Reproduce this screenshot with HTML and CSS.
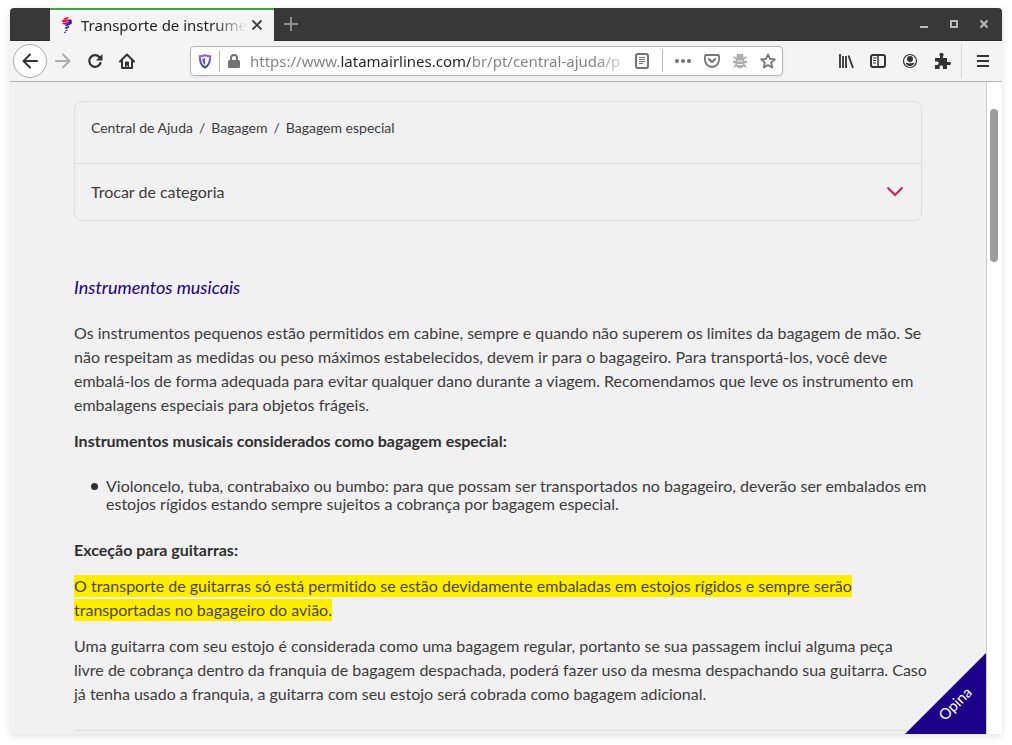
FILE: index.html
```html
<!DOCTYPE html>
<html lang="pt-BR">
<head>
<meta charset="utf-8">
<meta name="viewport" content="width=device-width, initial-scale=1">
<title>Transporte de instrumentos musicais</title>
<link rel="stylesheet" href="styles.css">
</head>
<body>
<div class="window">
  <header class="titlebar">
    <div class="tab">
      <svg class="favicon" width="14" height="18" viewBox="0 0 14 18"><path fill="#e8114b" d="M3 2.500 8.500.800v1.500L5 4zM1.500 4l9.500-.800v1.600L3 6.500z"/><path fill="#a3148a" d="m2 7 9.500-1.600v1.800L4 8.800z"/><path fill="#2d1baa" d="m8 4.600 3.800-.500-.300 4L6 10.400l-1-1.600 4-1.200zM5 11.600l4-1.600v1.700l-3.500 1.300zM5.500 14l2-.800v1.400l-1.700.700zM4 16l2-.500v1.200l-1.500.300z"/></svg>
      <span class="tab-title">Transporte de instrume</span>
      <button class="icon-btn tab-close" aria-label="Fechar aba"><svg width="12" height="12" viewBox="0 0 12 12"><path d="m1.500 1.500 9 9m0-9-9 9" fill="none" stroke="currentColor" stroke-width="1.800"/></svg></button>
    </div>
    <button class="icon-btn new-tab" aria-label="Nova aba"><svg width="14" height="14" viewBox="0 0 14 14"><path d="M7 0v14M0 7h14" fill="none" stroke="currentColor" stroke-width="1.500"/></svg></button>
    <div class="window-controls">
      <button class="icon-btn" aria-label="Minimizar"><svg width="10" height="10" viewBox="0 0 10 10"><path d="M1 8h8" stroke="currentColor" stroke-width="2"/></svg></button>
      <button class="icon-btn" aria-label="Maximizar"><svg width="10" height="10" viewBox="0 0 10 10"><path d="M2 2h6v6H2z" fill="none" stroke="currentColor" stroke-width="2"/></svg></button>
      <button class="icon-btn" aria-label="Fechar"><svg width="10" height="10" viewBox="0 0 10 10"><path d="m1.500 1.500 7 7m0-7-7 7" stroke="currentColor" stroke-width="2"/></svg></button>
    </div>
  </header>

  <nav class="toolbar" aria-label="Navegação">
    <button class="icon-btn back" aria-label="Voltar"><svg width="16" height="16" viewBox="0 0 16 16"><path d="M15 8H2m6-6.500L1.500 8 8 14.500" fill="none" stroke="currentColor" stroke-width="2" stroke-linecap="round" stroke-linejoin="round"/></svg></button>
    <button class="icon-btn nav-btn muted" aria-label="Avançar"><svg width="16" height="16" viewBox="0 0 16 16"><path d="M1 8h13M8 1.500 14.500 8 8 14.500" fill="none" stroke="currentColor" stroke-width="2" stroke-linecap="round" stroke-linejoin="round"/></svg></button>
    <button class="icon-btn nav-btn" aria-label="Recarregar"><svg width="16" height="16" viewBox="0 0 16 16"><path d="M12.500 4.200A5.800 5.800 0 1 0 13.500 10" fill="none" stroke="currentColor" stroke-width="2.200" stroke-linecap="round"/><path d="M15.500 1v6.500H9z" fill="currentColor"/></svg></button>
    <button class="icon-btn nav-btn" aria-label="Página inicial"><svg width="16" height="16" viewBox="0 0 16 16"><path d="M1 8.500 8 1.500l7 7M3 8v7h10V8" fill="none" stroke="currentColor" stroke-width="2" stroke-linecap="round" stroke-linejoin="round"/><path d="M6 15V9.500a1 1 0 0 1 1-1h2a1 1 0 0 1 1 1V15H8.700v-2.500H7.500V15z" fill="currentColor"/></svg></button>

    <div class="address">
      <button class="icon-btn" aria-label="Proteção"><svg width="14" height="15" viewBox="0 0 14 15"><defs><linearGradient id="shield" x1="0" y1="0" x2="0" y2="1"><stop offset="0" stop-color="#9059ff"/><stop offset="1" stop-color="#3a4bb0"/></linearGradient></defs><path d="M7 1.200c2 .600 3.500.900 5.200 1 0 6-1 9.300-5.200 11.300C2.800 11.500 1.800 8.200 1.800 2.200 3.500 2.100 5 1.800 7 1.200z" fill="none" stroke="url(#shield)" stroke-width="2"/><path d="M7 4v7C5 9.500 4.500 7.500 4.300 4.700z" fill="url(#shield)"/></svg></button>
      <span class="divider"></span>
      <button class="icon-btn soft" aria-label="Conexão segura"><svg width="12" height="14" viewBox="0 0 12 14"><path d="M3 7V4a3 3 0 0 1 6 0v3" fill="none" stroke="currentColor" stroke-width="2"/><rect y="6" width="12" height="8" rx="1.500" fill="currentColor"/></svg></button>
      <input class="url" type="text" aria-label="Endereço" value="https://www.latamairlines.com/br/pt/central-ajuda/p">
      <button class="icon-btn soft" aria-label="Modo de leitura"><svg width="14" height="16" viewBox="0 0 14 16"><rect x="1" y="1" width="12" height="14" rx="2" fill="none" stroke="currentColor" stroke-width="2"/><path d="M4 4.500h6M4 6.500h6M4 8.500h6M4 10.500h4" stroke="currentColor"/></svg></button>
      <span class="divider reader-divider"></span>
      <div class="actions">
        <button class="icon-btn soft" aria-label="Mais ações"><svg width="18" height="16" viewBox="0 0 18 16" fill="currentColor"><circle cx="3" cy="8" r="2"/><circle cx="9" cy="8" r="2"/><circle cx="15" cy="8" r="2"/></svg></button>
        <button class="icon-btn soft" aria-label="Salvar no Pocket"><svg width="16" height="16" viewBox="0 0 16 16"><path d="M2 2h12a1 1 0 0 1 1 1v4a7 7 0 0 1-14 0V3a1 1 0 0 1 1-1z" fill="none" stroke="currentColor" stroke-width="1.800"/><path d="m4.800 6 3.200 3 3.200-3" fill="none" stroke="currentColor" stroke-width="2" stroke-linecap="round" stroke-linejoin="round"/></svg></button>
        <button class="icon-btn muted" aria-label="Relatar problema"><svg width="16" height="16" viewBox="0 0 16 16"><path d="m1.500 4 3.500 2M14.500 4 11 6M1 9h14M2 14l3-2.500m9 2.500-3-2.500M5 1l2 2m4-2L9 3" stroke="currentColor" stroke-width="1.800"/><ellipse cx="8" cy="9.500" rx="4.800" ry="6" fill="currentColor"/><circle cx="8" cy="4.500" r="3.500" fill="currentColor"/><path d="M5.500 8h5m-5 3.500h5" stroke="#fff" stroke-width="1.200"/></svg></button>
        <button class="icon-btn soft" aria-label="Adicionar aos favoritos"><svg width="16" height="16" viewBox="0 0 16 16"><path d="m8 1.500 2 4.400 4.800.500-3.600 3.200 1 4.900L8 12l-4.200 2.500 1-4.900L1.200 6.400 6 5.900z" fill="none" stroke="currentColor" stroke-width="1.800" stroke-linejoin="round"/></svg></button>
      </div>
    </div>

    <div class="tools">
      <button class="icon-btn" aria-label="Biblioteca"><svg width="16" height="16" viewBox="0 0 16 16"><path d="M2 1v14M5 3v12M8 3v12M10.500 2.500 15 15" fill="none" stroke="currentColor" stroke-width="1.800"/></svg></button>
      <button class="icon-btn" aria-label="Painel lateral"><svg width="16" height="16" viewBox="0 0 16 16"><rect x="1" y="2" width="14" height="12" rx="2" fill="none" stroke="currentColor" stroke-width="2"/><path d="M8 2v12" stroke="currentColor" stroke-width="1.500"/><path d="M3 5h3.500M3 7.500h3M3 10h3" stroke="currentColor"/></svg></button>
      <button class="icon-btn" aria-label="Conta"><svg width="16" height="16" viewBox="0 0 16 16"><circle cx="8" cy="8" r="6.500" fill="none" stroke="currentColor" stroke-width="1.200"/><circle cx="8" cy="6" r="3" fill="currentColor"/><path d="M3.500 9.500c1.500 1 7.500 1 9 0-.500 2.200-2.200 3.500-4.500 3.500s-4-1.300-4.500-3.500z" fill="currentColor"/></svg></button>
      <button class="icon-btn" aria-label="Extensões"><svg width="18" height="16" viewBox="0 0 18 16"><path d="M1 5h5V3a2 2 0 1 1 3 0v2h4v4h1.500a1.700 1.700 0 1 1 0 3H13v4H9v-2a1.700 1.700 0 0 0-3.400 0v2H1v-4h2a1.700 1.700 0 0 0 0-3.500H1z" fill="currentColor"/></svg></button>
      <span class="tools-divider"></span>
      <button class="icon-btn" aria-label="Abrir menu"><svg width="14" height="14" viewBox="0 0 14 14"><path d="M1 2h12M1 7h12M1 12h12" stroke="currentColor" stroke-width="2"/></svg></button>
    </div>
  </nav>

  <div class="viewport">
    <main class="page">
      <section class="category">
        <nav class="breadcrumb" aria-label="Trilha">
          <a href="#ajuda">Central de Ajuda</a><span>/</span><a href="#bagagem">Bagagem</a><span>/</span><a href="#especial">Bagagem especial</a>
        </nav>
        <button class="switcher">Trocar de categoria
          <svg width="18" height="11" viewBox="0 0 18 11"><path d="m1.500 1.500 7.500 7.500 7.500-7.500" fill="none" stroke="#d91a59" stroke-width="2"/></svg>
        </button>
      </section>

      <article class="article">
        <h1>Instrumentos musicais</h1>
        <p>Os instrumentos pequenos estão permitidos em cabine, sempre e quando não superem os limites da bagagem de mão. Se<br>não respeitam as medidas ou peso máximos estabelecidos, devem ir para o bagageiro. Para transportá-los, você deve<br>embalá-los de forma adequada para evitar qualquer dano durante a viagem. Recomendamos que leve os instrumento em<br>embalagens especiais para objetos frágeis.</p>
        <h2>Instrumentos musicais considerados como bagagem especial:</h2>
        <ul>
          <li><span>Violoncelo, tuba, contrabaixo ou bumbo: para que possam ser transportados no bagageiro, deverão ser embalados em<br>estojos rígidos estando sempre sujeitos a cobrança por bagagem especial.</span></li>
        </ul>
        <h2>Exceção para guitarras:</h2>
        <p><mark>O transporte de guitarras só está permitido se estão devidamente embaladas em estojos rígidos e sempre serão<br>transportadas no bagageiro do avião.</mark></p>
        <p>Uma guitarra com seu estojo é considerada como uma bagagem regular, portanto se sua passagem inclui alguma peça<br>livre de cobrança dentro da franquia de bagagem despachada, poderá fazer uso da mesma despachando sua guitarra. Caso<br>já tenha usado a franquia, a guitarra com seu estojo será cobrada como bagagem adicional.</p>
        <hr>
      </article>
      <button class="feedback"><span>Opina</span></button>
    </main>
    <div class="scrollbar"><div class="thumb"></div></div>
  </div>
</div>
</body>
</html>
```
FILE: styles.css
```css
* {
  box-sizing: border-box;
}

body {
  margin: 0;
  padding: 8px 10px 11px;
  min-height: 100vh;
  display: flex;
  background: #fff;
  color: #3c3c3c;
  font-family: "Noto Sans", sans-serif;
}

button {
  font: inherit;
  color: inherit;
  border: 0;
  padding: 0;
  background: none;
}

svg {
  display: block;
  flex: none;
}

.window {
  flex: 1;
  min-width: 0;
  display: flex;
  flex-direction: column;
  border-radius: 4px 4px 0 0;
  overflow: hidden;
  box-shadow: 0 2px 6px rgba(0, 0, 0, 0.12);
}

.icon-btn {
  display: flex;
  align-items: center;
  justify-content: center;
  flex: none;
}

.muted {
  color: #adadad;
}

.soft {
  color: #737373;
}

/* Title bar */

.titlebar {
  height: 33px;
  display: flex;
  align-items: stretch;
  padding-left: 40px;
  background: #383838;
  border-bottom: 1px solid #2b2b2b;
}

.tab {
  width: 224px;
  height: 33px;
  display: flex;
  align-items: center;
  padding: 0 11px 2px 10px;
  border-top: 2px solid #43a047;
  background: #f4f4f4;
}

.favicon {
  margin-right: 7px;
}

.tab-title {
  flex: 1;
  min-width: 0;
  overflow: hidden;
  white-space: nowrap;
  font-size: 15px;
  line-height: 22px;
  color: #222;
  mask-image: linear-gradient(to right, #000 80%, transparent);
}

.tab-close {
  margin-left: 4px;
}

.new-tab {
  padding: 0 10px;
  color: #aaa;
}

.window-controls {
  display: flex;
  gap: 20px;
  margin-left: auto;
  padding-right: 13px;
  color: #bbb;
}

/* Toolbar */

.toolbar {
  height: 41px;
  display: flex;
  align-items: center;
  padding: 0 12px 0 3px;
  background: #f4f4f4;
  border-bottom: 1px solid #b4b4b4;
  color: #333;
}

.back {
  width: 34px;
  height: 34px;
  border: 1px solid #aaa;
  border-radius: 50%;
  background: #fff;
}

.nav-btn {
  width: 32px;
  height: 32px;
}

.address {
  flex: 1;
  min-width: 0;
  height: 30px;
  display: flex;
  align-items: center;
  margin: 0 55px 0 47px;
  padding: 0 6px 0 7px;
  border: 1px solid #b4b4b4;
  border-radius: 4px;
  background: #fff;
  box-shadow: 0 1px 3px rgba(0, 0, 0, 0.08);
}

.divider {
  width: 1px;
  height: 22px;
  margin: 0 8px 0 7px;
  background: #bbb;
}

.reader-divider {
  margin: 0 11px 0 13px;
}

.url {
  flex: 1;
  min-width: 0;
  height: 28px;
  margin: 0 9px 0 10px;
  padding: 0;
  border: 0;
  outline: 0;
  font: inherit;
  font-size: 15px;
  color: transparent;
  background: linear-gradient(to right, #808080 91px, #222 91px, #222 220px, #808080 220px, #808080 346px, #80808020 378px);
  background-clip: text;
}

.actions {
  display: flex;
  gap: 12px;
}

.tools {
  display: flex;
  align-items: center;
  gap: 16px;
}

.tools-divider {
  width: 1px;
  height: 34px;
  margin: 0 -2px 0 -7px;
  background: #d8d8d8;
}

/* Page */

.viewport {
  flex: 1;
  display: flex;
  background: #f1f1f1;
  font-family: Lato, "Noto Sans", sans-serif;
  font-variant-ligatures: none;
}

.page {
  position: relative;
  flex: 1;
  min-width: 0;
  padding: 19px 64px 2px;
}

.category {
  border: 1px solid #dedede;
  border-radius: 8px;
}

.breadcrumb {
  height: 62px;
  display: flex;
  gap: 6px;
  padding: 16px 16px 0;
  border-bottom: 1px solid #dedede;
  font-size: 14px;
  line-height: 20px;
}

.breadcrumb a {
  color: inherit;
  text-decoration: none;
}

.switcher {
  width: 100%;
  height: 56px;
  display: flex;
  align-items: center;
  justify-content: space-between;
  padding: 0 17px 2px 16px;
  font-size: 16px;
}

.article {
  padding-top: 54px;
  font-size: 16px;
  line-height: 24px;
  white-space: nowrap;
}

.article h1 {
  margin: 0 0 22px;
  font-size: 18px;
  font-weight: 400;
  font-style: italic;
  color: #1b0088;
}

.article h2 {
  margin: 0 0 12px;
  font-size: 16px;
  font-weight: 700;
  color: #2f2f2f;
}

.article p {
  margin: 0 0 12px;
}

.article ul {
  margin: 24px 0 25px;
  padding-left: 17px;
  line-height: 18px;
  list-style: none;
}

.article li {
  display: flex;
  gap: 8px;
}

.article li::before {
  content: "";
  flex: none;
  width: 7px;
  height: 7px;
  margin-top: 6px;
  border-radius: 50%;
  background: #2f2f2f;
}

.article mark {
  padding: 1px 0 2px;
  background: #ffed00;
  color: #4a4510;
}

.article hr {
  margin: 24px 0 0;
  border: 0;
  border-top: 1px solid #dcdcdc;
}

.feedback {
  position: absolute;
  right: 0;
  bottom: 0;
  width: 81px;
  height: 81px;
  background: #1b0088;
  color: #fff;
  font-size: 15px;
  clip-path: polygon(100% 0, 100% 100%, 0 100%);
}

.feedback span {
  display: block;
  padding-top: 26px;
  transform: rotate(-45deg);
}

.scrollbar {
  width: 16px;
  padding: 27px 3px 0;
  background: #fff;
  border-left: 1px solid #cfcfcf;
}

.thumb {
  width: 8px;
  height: 153px;
  border-radius: 4px;
  background: #9d9d9d;
}
```
